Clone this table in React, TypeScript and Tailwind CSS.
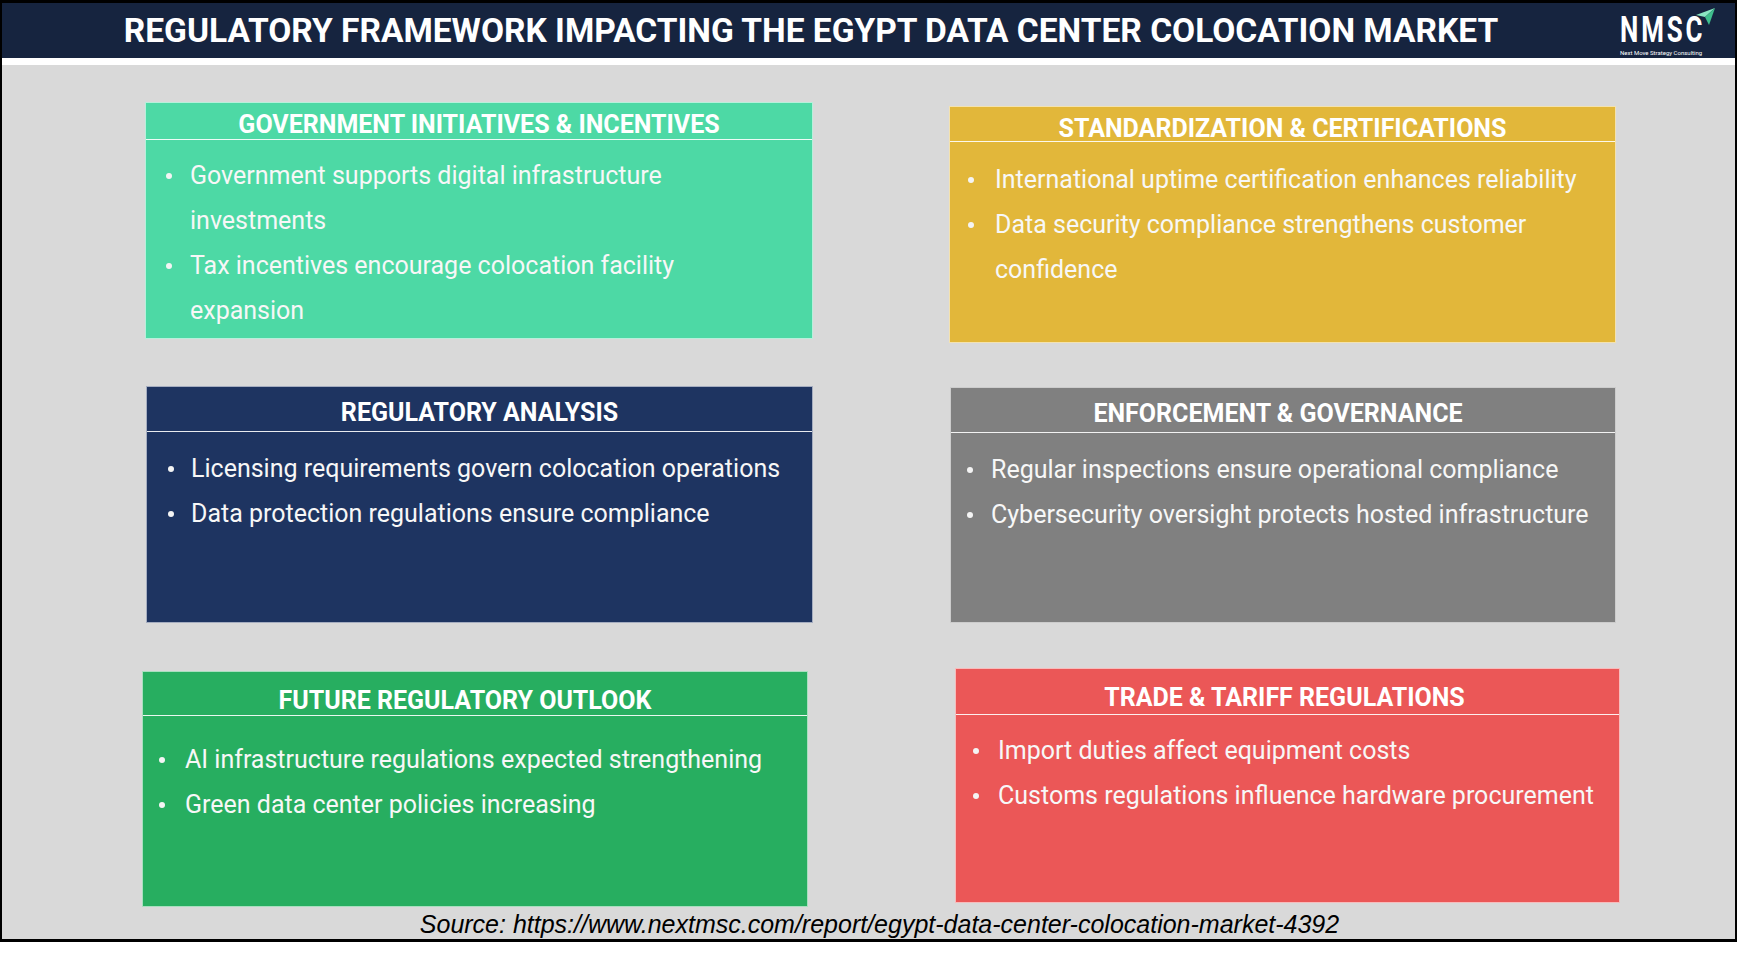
import React from "react";

type BoxProps = {
  title: string;
  items: string[];
  bg: string;
  w: string;
  h: string;
  mt: string;
  headH: string;
  headPt: string;
  headPr?: string;
  listPt: string;
  dotL: string;
  textL: string;
  pr: string;
};

function Box(p: BoxProps) {
  return (
    <div className={`${p.w} ${p.h} ${p.mt} ${p.bg} border-[1.5px] border-white/60 flex flex-col shrink-0`}>
      <div className={`${p.headH} ${p.headPt} ${p.headPr ?? ""} border-b-[1.5px] border-white/90 text-center text-white font-bold text-[25px] leading-[28px] shrink-0`}>
        {p.title}
      </div>
      <ul className={`${p.listPt} ${p.pr} text-[25px] leading-[45px] text-[#f7f7f7]`}>
        {p.items.map((t, i) => (
          <li key={i} className={`relative ${p.textL}`}>
            <span className={`absolute ${p.dotL} top-[20px] w-[6px] h-[6px] rounded-full bg-[#f4f4f4]`} />
            {t}
          </li>
        ))}
      </ul>
    </div>
  );
}

function Logo() {
  return (
    <div className="relative w-[115px] h-full shrink-0">
      <div className="absolute left-0 top-[9px] text-white font-bold text-[36px] leading-[36px] tracking-[4px] origin-left scale-x-[0.72] whitespace-nowrap" style={{ fontFamily: "Roboto, sans-serif" }}>
        NMSC
      </div>
      <svg className="absolute left-[76px] top-[5px]" width="20" height="17" viewBox="0 0 20 17">
        <polygon points="19,0 0,7 9,9" fill="#8ae6c2" />
        <polygon points="19,0 9,9 13,17" fill="#3fbf8d" />
      </svg>
      <div className="absolute left-0 top-[46px] text-[6px] leading-[8px] text-white whitespace-nowrap" style={{ fontFamily: "Roboto, sans-serif" }}>
        Next Move Strategy Consulting
      </div>
    </div>
  );
}

export default function App() {
  return (
    <div className="w-[1738px] h-[953px] bg-white" style={{ fontFamily: "Roboto, 'Liberation Sans', sans-serif" }}>
      <div className="w-[1737px] h-[942px] border-x-[2px] border-t-[3px] border-b-[3px] border-black bg-[#d9d9d9] flex flex-col">
        <div className="h-[55px] bg-[#16243f] flex shrink-0">
          <div className="flex-1 flex items-center justify-center">
            <h1 className="text-white font-bold text-[33.5px] leading-none">
              REGULATORY FRAMEWORK IMPACTING THE EGYPT DATA CENTER COLOCATION MARKET
            </h1>
          </div>
          <Logo />
        </div>
        <div className="h-[7px] bg-white shrink-0" />
        <div className="flex flex-col pt-[37px]">
          <div className="flex items-start pl-[143px] gap-[136px]">
            <Box
              title="GOVERNMENT INITIATIVES & INCENTIVES"
              items={["Government supports digital infrastructure investments", "Tax incentives encourage colocation facility expansion"]}
              bg="bg-[#4dd9a5]" w="w-[668px]" h="h-[237px]" mt="mt-0"
              headH="h-[37px]" headPt="pt-[8px]" listPt="pt-[13px]" dotL="left-[20px]" textL="pl-[44px]" pr="pr-[24px]"
            />
            <Box
              title="STANDARDIZATION & CERTIFICATIONS"
              items={["International uptime certification enhances reliability", "Data security compliance strengthens customer confidence"]}
              bg="bg-[#e2b73a]" w="w-[667px]" h="h-[237px]" mt="mt-[4px]"
              headH="h-[35px]" headPt="pt-[8px]" listPt="pt-[15px]" dotL="left-[18px]" textL="pl-[45px]" pr="pr-[8px]"
            />
          </div>
          <div className="flex items-start pl-[144px] gap-[137px] mt-[43px]">
            <Box
              title="REGULATORY ANALYSIS"
              items={["Licensing requirements govern colocation operations", "Data protection regulations ensure compliance"]}
              bg="bg-[#1e3461]" w="w-[667px]" h="h-[237px]" mt="mt-0"
              headH="h-[45px]" headPt="pt-[12px]" listPt="pt-[14px]" dotL="left-[21px]" textL="pl-[44px]" pr="pr-[10px]"
            />
            <Box
              title="ENFORCEMENT & GOVERNANCE"
              items={["Regular inspections ensure operational compliance", "Cybersecurity oversight protects hosted infrastructure"]}
              bg="bg-[#808080]" w="w-[666px]" h="h-[236px]" mt="mt-[1px]"
              headH="h-[45px]" headPt="pt-[12px]" headPr="pr-[10px]" listPt="pt-[14px]" dotL="left-[16px]" textL="pl-[40px]" pr="pr-[10px]"
            />
          </div>
          <div className="flex items-start pl-[140px] gap-[147px] mt-[45px]">
            <Box
              title="FUTURE REGULATORY OUTLOOK"
              items={["AI infrastructure regulations expected strengthening", "Green data center policies increasing"]}
              bg="bg-[#27ae60]" w="w-[666px]" h="h-[236px]" mt="mt-[3px]"
              headH="h-[44px]" headPt="pt-[15px]" headPr="pr-[20px]" listPt="pt-[21px]" dotL="left-[16px]" textL="pl-[42px]" pr="pr-[10px]"
            />
            <Box
              title="TRADE & TARIFF REGULATIONS"
              items={["Import duties affect equipment costs", "Customs regulations influence hardware procurement"]}
              bg="bg-[#eb5757]" w="w-[665px]" h="h-[235px]" mt="mt-0"
              headH="h-[46px]" headPt="pt-[15px]" headPr="pr-[6px]" listPt="pt-[13px]" dotL="left-[17px]" textL="pl-[42px]" pr="pr-[10px]"
            />
          </div>
          <div className="h-[31px] flex items-center justify-center pl-[22px] pt-[4px]">
            <p className="italic text-[25px] leading-none text-black" style={{ fontFamily: "'Liberation Sans', Arial, sans-serif" }}>
              Source: https://www.nextmsc.com/report/egypt-data-center-colocation-market-4392
            </p>
          </div>
        </div>
      </div>
    </div>
  );
}
